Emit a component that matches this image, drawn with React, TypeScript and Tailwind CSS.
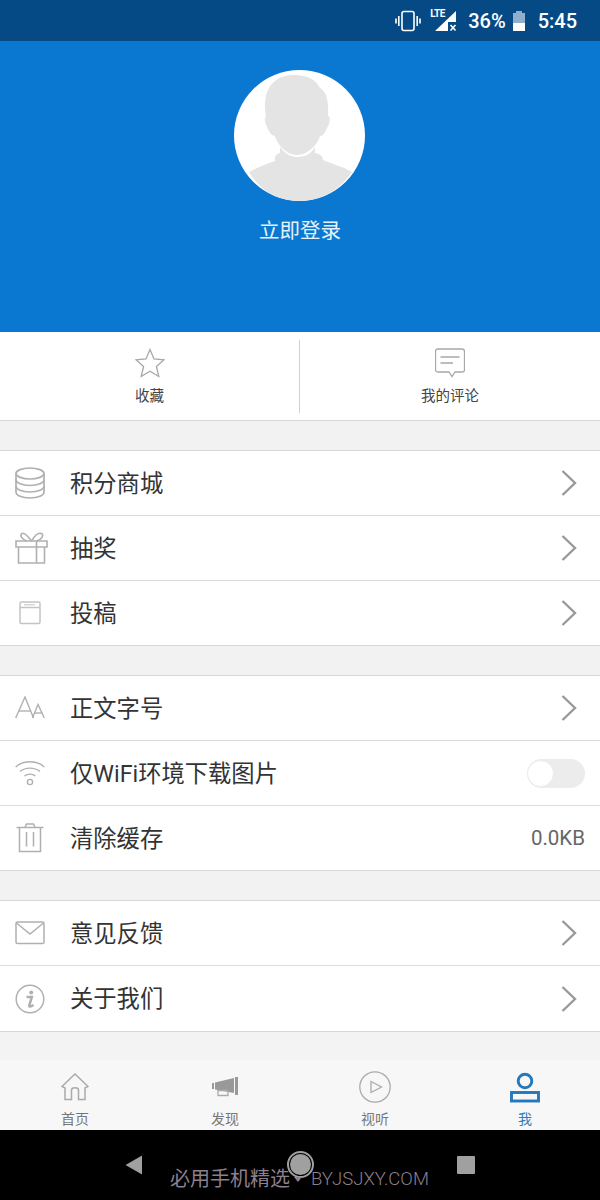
import React from 'react';

const FONT = "font-['Roboto','Noto_Sans_CJK_SC',sans-serif]";

const Chevron = () => (
  <svg width="18" height="28" viewBox="0 0 18 28" fill="none" stroke="#999" strokeWidth="2.4">
    <path d="M2.5 2 L15 14 L2.5 26" />
  </svg>
);

const ic = { fill: 'none', stroke: '#b0b0b0', strokeWidth: 1.5 };

const DbIcon = () => (
  <svg width="30" height="32" viewBox="0 0 30 32" {...ic} strokeWidth="1.7">
    <ellipse cx="15" cy="6.5" rx="14" ry="5.5" />
    <path d="M1 6.5 V25 C1 28.5 7 31 15 31 C23 31 29 28.5 29 25 V6.5" />
    <path d="M1 12.5 C1 16 7 18.5 15 18.5 C23 18.5 29 16 29 12.5" />
    <path d="M1 19 C1 22.5 7 25 15 25 C23 25 29 22.5 29 19" />
  </svg>
);
const GiftIcon = () => (
  <svg className="ml-[2px] shrink-0" width="33" height="32" viewBox="0 0 33 32" {...ic} strokeWidth="1.6">
    <path d="M1 9 H32 V15 H1 Z" />
    <path d="M3.5 15 V31 H29.5 V15" />
    <path d="M21.5 9 V31" />
    <path d="M16.5 9 C12 3 9 0.5 7 1.5 C4.5 3 7 8 12 9" />
    <path d="M16.5 9 C20 3 24 0.5 26.5 1.5 C29 3 27 8 21.5 9" />
  </svg>
);
const DocIcon = () => (
  <svg width="22" height="24" viewBox="0 0 22 24" {...ic} stroke="#c4c4c4">
    <rect x="1" y="1" width="20" height="21.5" rx="1.5" />
    <path d="M1 6.5 H21" />
    <path d="M5 3.8 H16" strokeWidth="1" />
  </svg>
);
const FontIcon = () => (
  <svg width="30" height="24" viewBox="0 0 30 24" {...ic} strokeWidth="1.4">
    <path d="M0.7 22 L10 1 L18.5 22" />
    <path d="M4 15 H16" />
    <path d="M17.5 22 L23 8.5 L29.3 22" />
    <path d="M19.5 17 H27.5" />
  </svg>
);
const WifiIcon = () => (
  <svg width="30" height="26" viewBox="0 0 30 26" {...ic} strokeWidth="1.4">
    <path d="M0.7 7 C8 0 22 0 29.3 7" />
    <path d="M5 11.5 C10.5 7 19.5 7 25 11.5" />
    <path d="M9.5 16 C12.5 13.5 17.5 13.5 20.5 16" />
    <circle cx="15" cy="22" r="2.6" />
  </svg>
);
const TrashIcon = () => (
  <svg width="28" height="30" viewBox="0 0 28 30" {...ic}>
    <path d="M0.5 4.5 H27.5" />
    <path d="M9 4.5 L10.5 1 H17.5 L19 4.5" />
    <path d="M3.5 4.5 V28.5 H24.5 V4.5" />
    <path d="M10.5 9 V23.5 M17.5 9 V23.5" />
  </svg>
);
const MailIcon = () => (
  <svg width="30" height="24" viewBox="0 0 30 24" {...ic}>
    <rect x="1" y="1" width="28" height="21.5" rx="1.5" />
    <path d="M1.5 2 L15 13 L28.5 2" />
  </svg>
);
const InfoIcon = () => (
  <svg width="30" height="30" viewBox="0 0 30 30" {...ic}>
    <circle cx="15" cy="15" r="13.8" />
    <circle cx="16.2" cy="8.5" r="2" fill="#b0b0b0" stroke="none" />
    <path d="M11.5 13 H16.8 L14.3 21.5 C14 23 15.5 23 18.5 21" strokeWidth="2.6" />
  </svg>
);

const Row = ({ icon, label, right, last, short }: { icon: React.ReactNode; label: string; right?: React.ReactNode; last?: boolean; short?: boolean }) => (
  <div className={`flex items-center ${short ? 'h-[64px]' : 'h-[65px]'} bg-white pl-[15px] pr-[15px] ${last ? '' : 'border-b border-[#dcdcdc]'}`}>
    <div className="w-[30px] flex justify-center shrink-0">{icon}</div>
    <span className="ml-[25px] text-[23.3px] text-[#333] flex-1 leading-none pt-[3px]">{label}</span>
    {right ?? (
      <span className="mr-[7px] flex">
        <Chevron />
      </span>
    )}
  </div>
);

const Group = ({ children }: { children: React.ReactNode }) => (
  <div className="border-y border-[#d8d8d8] bg-white">{children}</div>
);

const NavItem = ({ icon, label, active }: { icon: React.ReactNode; label: string; active?: boolean }) => (
  <div className="flex-1 flex flex-col items-center">
    <div className="h-[36px] flex items-center justify-center">{icon}</div>
    <span className={`mt-[4px] text-[14px] leading-[20px] ${active ? 'text-[#2a7fc0]' : 'text-[#777]'}`}>{label}</span>
  </div>
);

export default function App() {
  return (
    <div className={`relative w-[600px] h-[1200px] overflow-hidden bg-[#f2f2f2] flex flex-col ${FONT}`}>
      {/* Status bar */}
      <div className="h-[41px] bg-[#064a85] flex items-center justify-end pr-[23px] text-white shrink-0">
        <svg width="26" height="22" viewBox="0 0 26 22" fill="none" stroke="#fff" strokeWidth="1.6">
          <rect x="7" y="1.5" width="12" height="19" rx="2" />
          <path d="M3.8 6 V16 M1 8.5 V13.5 M22.2 6 V16 M25 8.5 V13.5" />
        </svg>
        <div className="relative w-[27px] h-[22px] ml-[9px]">
          <span className="absolute left-0 top-[-2px] text-[10px] font-bold leading-[12px] tracking-[-0.5px]">LTE</span>
          <svg className="absolute left-[5px] top-[1px]" width="22" height="21" viewBox="0 0 22 21">
            <path d="M0 20 L21 0 V11 H13 V20 Z" fill="#fff" />
            <path d="M15.5 14 L20.5 19.5 M20.5 14 L15.5 19.5" stroke="#fff" strokeWidth="1.6" />
          </svg>
        </div>
        <span className="ml-[11px] text-[20px] font-medium leading-none">36%</span>
        <div className="ml-[7px] w-[13px] h-[20px] relative flex flex-col items-center">
          <div className="w-[6px] h-[2px] bg-[#8fb0cc]" />
          <div className="w-[12px] flex-1 bg-[#8fb0cc] flex flex-col justify-end">
            <div className="h-[8px] bg-white" />
          </div>
        </div>
        <span className="ml-[12px] text-[20px] font-medium leading-none">5:45</span>
      </div>

      {/* Header */}
      <div className="h-[291px] bg-[#0a78d0] flex flex-col items-center pt-[29px] shrink-0">
        <div className="w-[131px] h-[131px] mr-[1px] rounded-full bg-white overflow-hidden">
          <svg width="131" height="131" viewBox="0 0 131 131">
            <path
              fill="#e4e4e4"
              d="M32 46 C28 24 36 5 60 5 C74 5 82 10 86 18 C92 21 95 30 94 46 C97 46 96 54 93 58 C91 63 89 66 86 66 C84 74 74 85 63 85 C52 85 43 74 41 66 C38 66 35 62 33 57 C31 53 30 48 32 46 Z"
            />
            <path
              fill="#e4e4e4"
              d="M46 77 C52 85 58 87 64 87 C71 87 77 84 81 77 L81 83 C86 84 89 86 89 90 C98 94 110 97 118 102 C104 122 86 131 65 131 C44 131 27 122 15 102 C24 97 33 94 41 91 C40 87 42 84 46 83 Z"
            />
          </svg>
        </div>
        <span className="mt-[15px] text-[20.5px] leading-[30px] text-white/90">立即登录</span>
      </div>

      {/* Favourites / comments */}
      <div className="h-[89px] bg-white border-b border-[#d8d8d8] flex items-center shrink-0">
        <div className="w-[299px] flex flex-col items-center pt-[2px]">
          <svg width="30" height="30" viewBox="0 0 30 30" fill="none" stroke="#a8a8a8" strokeWidth="1.3">
            <path d="M15 1.5 L19 11 L29 11.8 L21.4 18.4 L23.8 28.5 L15 23.2 L6.2 28.5 L8.6 18.4 L1 11.8 L11 11 Z" />
          </svg>
          <span className="mt-[10px] text-[14.5px] leading-[18px] text-[#444]">收藏</span>
        </div>
        <div className="w-px h-[73px] bg-[#d0d0d0]" />
        <div className="flex-1 flex flex-col items-center pt-[2px]">
          <svg width="30" height="30" viewBox="0 0 30 30" fill="none" stroke="#a8a8a8" strokeWidth="1.3">
            <path d="M3 1 H27 C28.5 1 29.5 2 29.5 3.5 V22 C29.5 23 28.5 24 27 24 H20 L17 28.5 L14 24 H3 C1.5 24 0.5 23 0.5 22 V3.5 C0.5 2 1.5 1 3 1 Z" />
            <path d="M5.5 9 H24.5 M5.5 15 H18" />
          </svg>
          <span className="mt-[10px] text-[14.5px] leading-[18px] text-[#444]">我的评论</span>
        </div>
      </div>

      <div className="flex flex-col gap-[29px] pt-[29px] shrink-0">
        <Group>
          <Row icon={<DbIcon />} label="积分商城" />
          <Row icon={<GiftIcon />} label="抽奖" />
          <Row icon={<DocIcon />} label="投稿" last short />
        </Group>
        <Group>
          <Row icon={<FontIcon />} label="正文字号" />
          <Row
            icon={<WifiIcon />}
            label="仅WiFi环境下载图片"
            right={
              <div className="w-[58px] h-[29px] rounded-full bg-[#ececec] flex items-center">
                <div className="w-[27px] h-[27px] rounded-full bg-white border border-[#ececec]" />
              </div>
            }
          />
          <Row icon={<TrashIcon />} label="清除缓存" right={<span className="text-[20.5px] text-[#666] leading-none">0.0KB</span>} last short />
        </Group>
        <Group>
          <Row icon={<MailIcon />} label="意见反馈" />
          <Row icon={<InfoIcon />} label="关于我们" last />
        </Group>
      </div>

      <div className="flex-1 bg-[#f3f3f3]" />

      {/* Tab bar */}
      <div className="h-[70px] bg-[#f7f7f7] flex pt-[9px] shrink-0">
        <NavItem
          label="首页"
          icon={
            <svg width="28" height="28" viewBox="0 0 28 28" fill="none" stroke="#aaa" strokeWidth="1.5">
              <path d="M1 13.5 L14 1 L27 13.5 L24 15 V26.5 H17.5 V17 C17.5 14 10.5 14 10.5 17 V26.5 H4 V15 Z" />
            </svg>
          }
        />
        <NavItem
          label="发现"
          icon={
            <svg width="26" height="20" viewBox="0 0 26 20" fill="#999">
              <rect x="0" y="6" width="2" height="6" />
              <path d="M3 5.5 L22 1 V16 L3 12.5 Z" />
              <rect x="23" y="0" width="3" height="18" />
              <path d="M6 13.5 H16 V18.5 H6 Z" fill="none" stroke="#aaa" strokeWidth="1.3" />
            </svg>
          }
        />
        <NavItem
          label="视听"
          icon={
            <svg width="32" height="32" viewBox="0 0 32 32" fill="none" stroke="#aaa" strokeWidth="1.3">
              <circle cx="16" cy="16" r="15.2" />
              <path d="M12 10.5 L22.5 16 L12 21.5 Z" />
            </svg>
          }
        />
        <NavItem
          active
          label="我"
          icon={
            <svg width="30" height="32" viewBox="0 0 30 32" fill="none" stroke="#2478bc" strokeWidth="2.9">
              <circle cx="15" cy="10" r="6.8" />
              <rect x="1.5" y="21.5" width="27" height="8.5" />
            </svg>
          }
        />
      </div>

      {/* Navigation bar */}
      <div className="h-[70px] bg-black flex items-center pl-[125px] shrink-0 pb-[1px]">
        <svg width="18" height="20" viewBox="0 0 18 20" fill="#a0a0a0">
          <path d="M17 0.5 V19.5 L0.5 10 Z" />
        </svg>
        <div className="ml-[144px] w-[27px] h-[27px] rounded-full border-2 border-[#a0a0a0] bg-black p-[1px]">
          <div className="w-full h-full rounded-full bg-[#a0a0a0]" />
        </div>
        <div className="ml-[143px] w-[18px] h-[18px] bg-[#a0a0a0] rounded-[1px]" />
      </div>

      {/* Watermark */}
      <div className="absolute left-[170px] top-[1166px] text-[20px] leading-[26px] text-[#8d7f8d] whitespace-nowrap flex items-center">
        <span>必用手机精选</span>
        <span className="ml-[4px] w-[0] h-[0] border-x-[4px] border-t-[5px] border-x-transparent border-t-[#8d7f8d]" />
        <span className="ml-[9px] text-[18.5px] font-light">BYJSJXY.COM</span>
      </div>
    </div>
  );
}
